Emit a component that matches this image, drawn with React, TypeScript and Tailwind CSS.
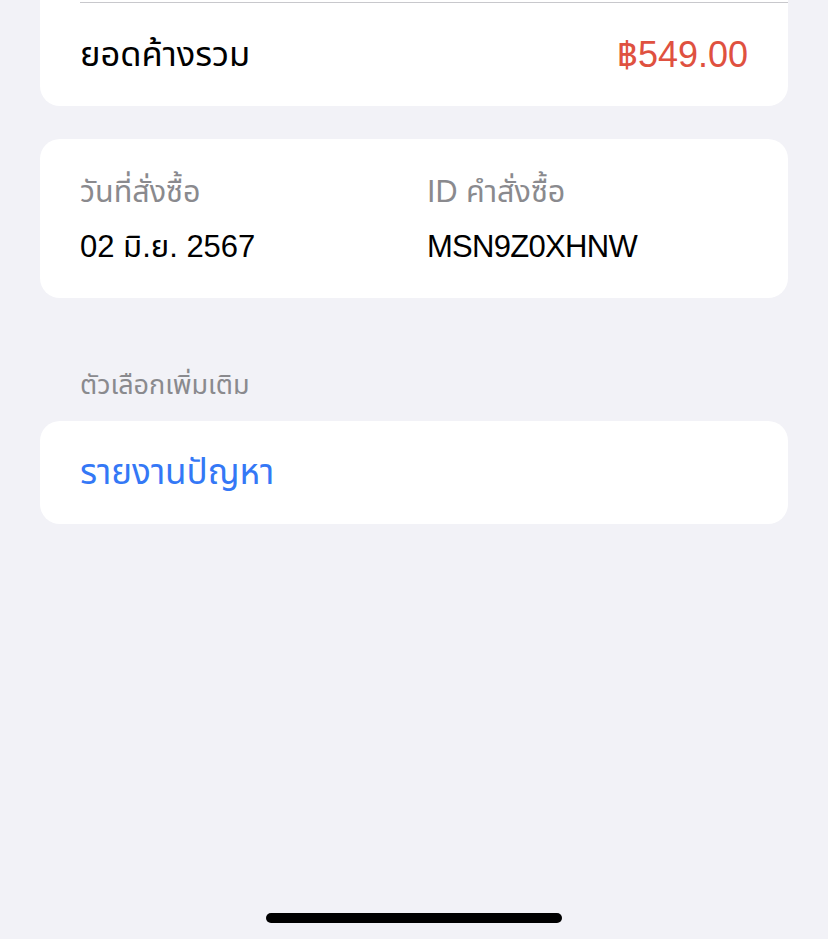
const FONT = "font-['Liberation_Sans','Noto_Sans_Thai','Noto_Sans',sans-serif]";

export default function App() {
  return (
    <div className={`min-h-[939px] w-[828px] bg-[#F2F2F7] flex flex-col ${FONT}`}>
      {/* Total card (top is scrolled off) */}
      <div className="mx-10 bg-white rounded-b-[20px]">
        <div className="h-[2px]" />
        <div className="ml-10 h-px bg-[#C8C8CC]" />
        <div className="h-[103px] pl-10 pr-10 flex items-center justify-between">
          <span className="text-[34.5px] text-black">ยอดค้างรวม</span>
          <span className="text-[36px] text-[#DF5140]">฿549.00</span>
        </div>
      </div>

      {/* Order date / id */}
      <div className="mx-10 mt-[33px] h-[159px] bg-white rounded-[20px] px-10 pt-[30px] grid grid-cols-2">
        <div className="flex flex-col">
          <span className="text-[30.5px] leading-[44px] text-[#8A8A8E]">วันที่สั่งซื้อ</span>
          <span className="mt-[12px] text-[31px] leading-[44px] text-black">02 มิ.ย. 2567</span>
        </div>
        <div className="flex flex-col pl-[13px]">
          <span className="text-[30.5px] leading-[44px] text-[#8A8A8E]">ID คำสั่งซื้อ</span>
          <span className="mt-[12px] text-[31px] leading-[44px] text-black tracking-[-0.7px]">MSN9Z0XHNW</span>
        </div>
      </div>

      {/* More options */}
      <div className="mt-[67px] px-20 h-[40px] flex items-center text-[27px] text-[#8A8A8E]">
        ตัวเลือกเพิ่มเติม
      </div>
      <div className="mx-10 mt-[16px] h-[103px] bg-white rounded-[20px] px-10 flex items-center">
        <span className="text-[35px] text-[#3478F6]">รายงานปัญหา</span>
      </div>

      {/* Home indicator */}
      <div className="flex-1" />
      <div className="flex justify-center pb-[16px]">
        <div className="w-[296px] h-[10px] rounded-full bg-black" />
      </div>
    </div>
  );
}
